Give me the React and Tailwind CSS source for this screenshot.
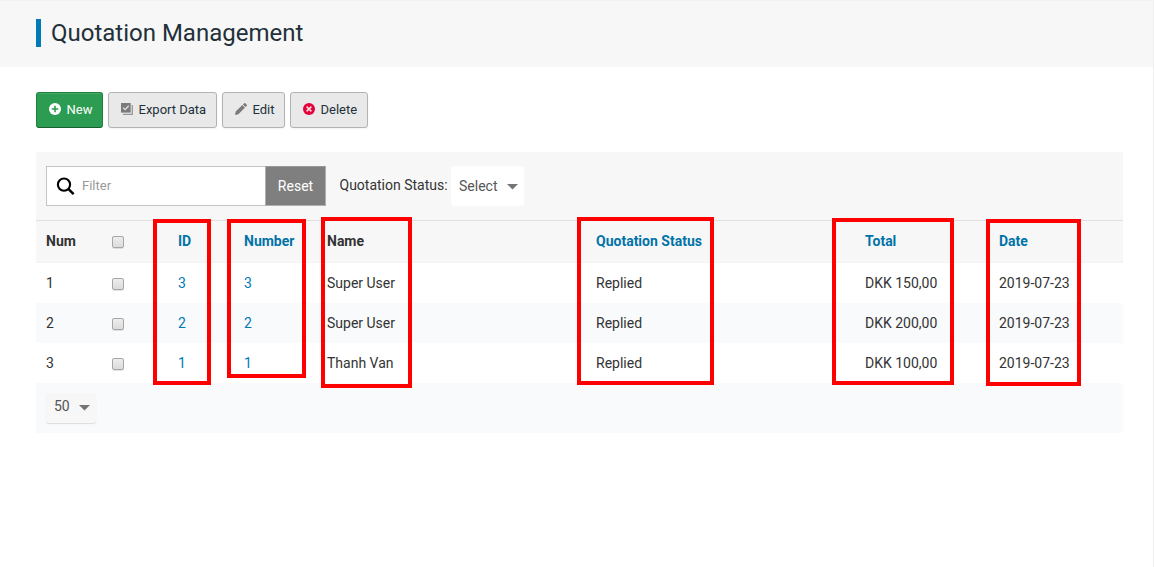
import React from "react";

const rows = [
  { num: 1, id: 3, name: "Super User", total: "DKK 150,00" },
  { num: 2, id: 2, name: "Super User", total: "DKK 200,00" },
  { num: 3, id: 1, name: "Thanh Van", total: "DKK 100,00" },
];

const grid = "grid grid-cols-[66px_66px_66px_83px_269px_269px_134px_134px]";

const highlights = [
  "left-[153px] top-[219px] w-[58px] h-[166px]",
  "left-[227px] top-[219px] w-[79px] h-[159px]",
  "left-[321px] top-[217px] w-[91px] h-[171px]",
  "left-[577px] top-[217px] w-[137px] h-[168px]",
  "left-[832px] top-[218px] w-[122px] h-[167px]",
  "left-[986px] top-[219px] w-[95px] h-[167px]",
];

function Check() {
  return (
    <span className="mt-[3px] block size-3 rounded-[2px] border border-[#a6a6a6] bg-linear-to-b from-[#ededed] to-[#dcdcdc] shadow-[0_1px_0_rgba(0,0,0,0.1)]" />
  );
}

function Button({ className, icon, children }) {
  return (
    <button
      className={
        "flex h-9 items-center gap-[5.5px] rounded-[3px] border pl-3 text-[13px] leading-5 whitespace-nowrap " + className
      }
    >
      {icon}
      {children}
    </button>
  );
}

const grey =
  "border-[#b3b3b3] bg-[#e9e9e9] text-[#22303a] shadow-[0_1px_2px_rgba(0,0,0,0.05)]";

function Caret() {
  return (
    <svg width="11" height="6" viewBox="0 0 11 6" className="shrink-0">
      <path d="M0 0h11L5.5 5.5z" fill="#757575" />
    </svg>
  );
}

export default function App() {
  return (
    <div className="relative h-[567px] w-[1154px] overflow-hidden border-r border-[#efefef] bg-white font-[Roboto,sans-serif] text-sm leading-5 text-[#333]">
      <header className="flex h-[67px] border-t border-[#f2f2f2] bg-[#f7f7f7] pt-[18px] pl-9">
        <h1 className="h-7 border-l-5 border-[#007bb5] pl-[10px] text-[24px] leading-7 text-[#22303a]">
          Quotation Management
        </h1>
      </header>

      <div className="mt-[25px] ml-9 flex gap-[5px]">
        <Button
          className="w-[67px] border-[#23813f] border-b-[#1b5f30] bg-[#2c9c52] text-white shadow-[inset_0_1px_0_rgba(255,255,255,0.12)]"
          icon={
            <svg width="12" height="12" viewBox="0 0 12 12" className="-mt-0.5">
              <circle cx="6" cy="6" r="6" fill="#fff" />
              <path d="M6 2.7v6.6M2.7 6h6.6" stroke="#2c9c52" strokeWidth="1.6" />
            </svg>
          }
        >
          New
        </Button>
        <Button
          className={"w-[109px] " + grey}
          icon={
            <svg width="12" height="12" viewBox="0 0 12 12" className="-mt-0.5">
              <path d="M0 0h9.7v9.6H0z" fill="#7b7b7b" />
              <path d="M2.1 4.6l2 2 3.6-3.9" stroke="#e0e0e0" strokeWidth="1.3" fill="none" />
              <path d="M11.3 2v9.3H2" stroke="#979797" strokeWidth="1.3" fill="none" />
            </svg>
          }
        >
          Export Data
        </Button>
        <Button
          className={"w-[63px] " + grey}
          icon={
            <svg width="12" height="12" viewBox="0 0 12 12" className="-mt-0.5">
              <path d="M0 12l.7-3.4 6.6-6.5 2.6 2.6-6.5 6.6zM7.9 1.5L9.3.2c.3-.3.7-.2 1 0l1.5 1.5c.3.3.3.7 0 1l-1.3 1.4z" fill="#7b7b7b" />
            </svg>
          }
        >
          Edit
        </Button>
        <Button
          className={"w-[78px] " + grey}
          icon={
            <svg width="12" height="12" viewBox="0 0 12 12" className="-mt-0.5">
              <circle cx="6" cy="6" r="6" fill="#e6003a" />
              <path d="M3.6 3.6l4.8 4.8M8.4 3.6L3.6 8.4" stroke="#eadde0" strokeWidth="1.6" />
            </svg>
          }
        >
          Delete
        </Button>
      </div>

      <main className="mt-6 ml-9 w-[1087px]">
        <div className="flex h-[68px] bg-[#f7f7f7] pt-[14px] pl-[10px]">
          <div className="flex h-10 w-[219px] items-center border border-r-0 border-[#c4c4c4] bg-white pl-[9px] text-[13px] text-[#999]">
            <svg width="19" height="19" viewBox="0 0 19 19" className="mr-[7px]">
              <circle cx="8" cy="7.6" r="6.1" fill="none" stroke="#000" strokeWidth="2.1" />
              <path d="M12.3 11.8l5.3 5.3" stroke="#000" strokeWidth="2.5" />
            </svg>
            Filter
          </div>
          <button className="h-10 w-[61px] border border-[#b0b0b0] border-t-[#999] bg-[#7f7f7f] text-white">
            Reset
          </button>
          <span className="mt-[9px] ml-[13.5px] w-[111.5px] whitespace-nowrap">Quotation Status:</span>
          <div className="flex h-10 w-[73px] items-center justify-between rounded-[3px] bg-white pr-[6px] pl-2 text-[#555]">
            Select
            <span className="mt-[2px]"><Caret /></span>
          </div>
        </div>

        <div className={grid + " h-[43px] border-t border-b border-t-[#e0e0e0] border-b-[#f3f3f3] bg-[#f7f7f7] pt-[10px] font-bold text-[#0073a8] [&>*]:pl-[10px] [&>*]:whitespace-nowrap"}>
          <span className="text-[#333]">Num</span>
          <span className="pt-[2px]"><Check /></span>
          <span>ID</span>
          <span>Number</span>
          <span className="text-[#333]">Name</span>
          <span>Quotation Status</span>
          <span>Total</span>
          <span>Date</span>
        </div>

        {rows.map((r) => (
          <div key={r.num} className={grid + " h-10 bg-white pt-[10px] nth-[4]:bg-[#f9fafc] [&>*]:pl-[10px] [&>*]:whitespace-nowrap"}>
            <span>{r.num}</span>
            <span className="pt-[2px]"><Check /></span>
            <span className="text-[#007bb5]">{r.id}</span>
            <span className="text-[#007bb5]">{r.id}</span>
            <span>{r.name}</span>
            <span>Replied</span>
            <span>{r.total}</span>
            <span>2019-07-23</span>
          </div>
        ))}

        <div className="h-[50px] bg-[#f9fafc] pt-[10px] pl-[10px]">
          <div className="flex h-[30px] w-[50px] items-center justify-between rounded-[3px] bg-[#f7f7f7] pr-[6px] pb-[4px] pl-2 text-[#555] shadow-[0_1px_1px_rgba(0,0,0,0.12)]">
            50
            <span className="mt-[3px]"><Caret /></span>
          </div>
        </div>
      </main>

      {highlights.map((h) => (
        <div key={h} className={"pointer-events-none absolute border-4 border-[#ff0000] " + h} />
      ))}
    </div>
  );
}
